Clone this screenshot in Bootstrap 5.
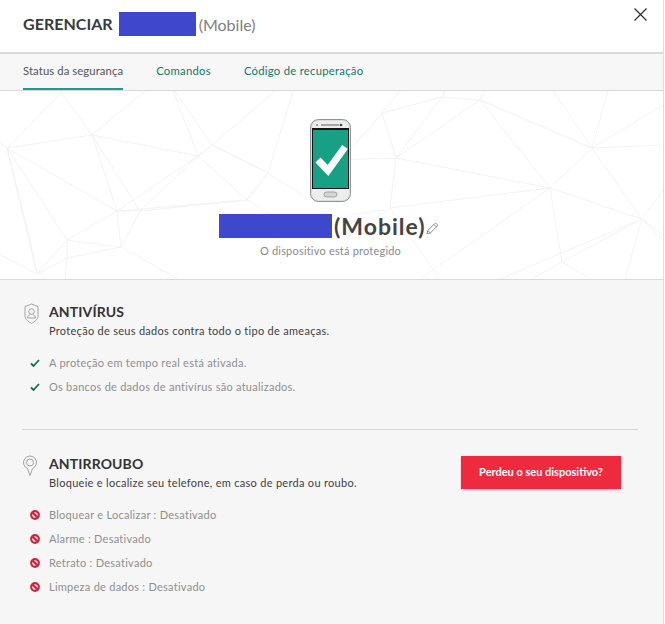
<!DOCTYPE html>
<html lang="pt">
<head>
<meta charset="utf-8">
<title>Gerenciar</title>
<link rel="stylesheet" href="https://cdn.jsdelivr.net/npm/bootstrap@5.3.0/dist/css/bootstrap.min.css">
<style>
html,body{height:624px;overflow:hidden;background:#fff}
body{font-family:"Lato","Open Sans",sans-serif;color:#444;font-size:11px}
.shell{width:664px;height:624px;border-right:1px solid #ddd;display:flex;flex-direction:column}
.mask{background:#3f48cc;display:block;flex:none}
.top-bar{height:52px;padding:12px 0 0 23px;position:relative;background:#fff}
.top-title{font-size:16px;font-weight:700;color:#3a3a3a;letter-spacing:.03px;line-height:24px}
.top-mask{width:77px;height:24px;margin-left:6px;margin-right:3px}
.top-device{font-size:16px;color:#808080;line-height:24px;margin-top:1px}
.close-x{position:absolute;left:634px;top:8px;width:13px;height:13px}
.tab-strip{height:39px;background:#f7f7f7;border-top:2px solid #d9d9d9;border-bottom:1px solid #d9d9d9;padding-left:23px;gap:33px}
.tab-strip .nav-link{padding:0;height:36px;line-height:34px;font-size:11.3px;color:#0f7a68;letter-spacing:.26px;background:none;border:0;border-radius:0}
.tab-strip .nav-link.active{color:#555;border-bottom:2px solid #1f9c88;background:none;letter-spacing:.09px}
.hero{height:189px;position:relative;background:#fff;border-bottom:1px solid #d9d9d9;overflow:hidden}
.mesh{position:absolute;left:0;top:0;width:663px;height:188px}
.hero-body{position:relative;height:188px;padding-top:28px}
.phone{display:block;margin-left:310px;width:41px;height:83px}
.device-line{height:24px;margin-top:12px;margin-left:219px}
.hero-mask{width:113px;height:24px;margin-right:2px}
.device-name{font-size:23px;font-weight:700;line-height:24px;color:#444;letter-spacing:1px}
.hero-note{font-size:11px;text-align:center;color:#8a8a8a;margin-top:5px;line-height:16px;letter-spacing:.2px;padding-right:2px}
.panel{flex:1;background:#f6f6f6;padding:23px 25px 0 22px}
.block-icon{width:20px;flex:none;margin-right:7px}
.block-title{font-size:14px;font-weight:700;color:#333;line-height:18px;letter-spacing:.12px}
.block-text{font-size:11px;color:#3f3f3f;line-height:16px;margin-top:2px;letter-spacing:.29px}
.state-list{margin:12px 0 0 8px;padding:0;list-style:none}
.state-list li{height:24px;line-height:24px;color:#8f8f8f;font-size:11px;letter-spacing:.26px;display:flex;align-items:center}
.state-list svg{width:10px;height:10px;margin-right:9px;flex:none}
.split{border:0;border-top:1px solid #d5d5d5;opacity:1;margin:30px 0 25px}
.lost-btn{width:160px;height:33px;background:#ee2a3e;border:0;border-radius:0;color:#fff;font-size:11px;font-weight:700;padding:0;box-shadow:0 1px 2px rgba(238,42,62,.35);margin:1px 17px 0 0}
.lost-btn:hover{background:#ee2a3e;color:#fff}
</style>
</head>
<body>
<div class="shell">
  <div class="top-bar d-flex align-items-start">
    <span class="top-title">GERENCIAR</span>
    <span class="mask top-mask"></span>
    <span class="top-device">(Mobile)</span>
    <svg class="close-x" viewBox="0 0 13 13"><path d="M.5.5l12 12M12.5.5l-12 12" stroke="#333" stroke-width="1.3" fill="none"/></svg>
  </div>
  <ul class="nav tab-strip">
    <li class="nav-item"><a class="nav-link active" href="#">Status da segurança</a></li>
    <li class="nav-item"><a class="nav-link" href="#">Comandos</a></li>
    <li class="nav-item"><a class="nav-link" href="#">Código de recuperação</a></li>
  </ul>
  <div class="hero">
    <svg class="mesh" viewBox="0 91 663 188" fill="none" stroke="#f3f3f3" stroke-width="1">
      <path d="M0 143L7 148L92 135L198 156L212 145L268 173L247 200L117 211L92 135M7 148L117 211L67 240L37 274L7 148L67 240M117 211L121 247L67 240M140 211L92 135M140 211L117 211M140 211L198 156M140 211L121 247M140 211L247 200M117 211L198 156M212 145L175 91M198 156L173 91M212 145L275 91M268 173L293 91M247 200L268 173L212 145L198 156L247 200M247 200L280 220M268 173L310 200M0 255L37 274L67 258L121 247L180 280M67 240L67 258L65 279M37 274L30 240L7 148M92 135L145 91M92 135L60 91M7 148L63 91"/>
      <path d="M382 113L442 97L480 100L396 158L382 113M396 158L390 208L345 240M396 158L550 188L480 100M442 97L396 158M442 97L445 91M480 100L485 91M382 113L400 91M382 113L350 150M396 158L340 160M390 208L550 188M550 188L592 148L480 100L592 148L663 145M592 148L608 91M592 148L553 91M592 148L663 105M550 188L642 219L663 235M592 148L642 219M550 188L562 262L642 219L625 279M550 188L420 279M562 262L532 279M562 262L590 279M642 219L663 190M642 219L500 279M390 208L440 279M385 210L350 215M663 240L642 219"/>
    </svg>
    <div class="hero-body">
      <svg class="phone" viewBox="0 0 41 83">
        <rect x=".5" y=".5" width="40" height="82" rx="8" fill="#dcdede" stroke="#8f9393"/>
        <rect x="2" y="2" width="37" height="79" rx="6.500" fill="#eceeee"/>
        <rect x="11" y="5" width="18" height="2" fill="#a4a8a8"/>
        <circle cx="31" cy="6" r="1.300" fill="#444"/>
        <circle cx="7" cy="6" r=".8" fill="#444"/>
        <rect x="2" y="9" width="37" height="61" fill="#151515"/>
        <rect x="3" y="11" width="35" height="58" fill="#18a085"/>
        <path d="M8 41l10 10.500 17-23.500" fill="none" stroke="#fff" stroke-width="7"/>
        <rect x="14" y="73" width="13" height="5" rx="2.500" fill="#d4d6d6" stroke="#8f9393" stroke-width=".8"/>
      </svg>
      <div class="device-line d-flex align-items-center">
        <span class="mask hero-mask"></span>
        <span class="device-name">(Mobile)</span>
        <svg width="13" height="13" viewBox="0 0 13 13" fill="none" stroke="#777" stroke-width=".8" class="ms-0 mt-1"><path d="M1 12l.8-3.500 7-7a1 1 0 0 1 1.500 0l1 1a1 1 0 0 1 0 1.500l-7 7zM1.800 8.500l2.700 2.700M8 2.500l2.500 2.500"/></svg>
      </div>
      <div class="hero-note">O dispositivo está protegido</div>
    </div>
  </div>
  <div class="panel">
    <div class="d-flex">
      <div class="block-icon">
        <svg width="20" height="22" viewBox="0 0 20 22" fill="none" stroke="#999" stroke-width=".9"><path d="M9.500 1L3 3.500v10c0 3 4 5.500 6.500 7 2.500-1.500 6.500-4 6.500-7v-10z"/><circle cx="9.500" cy="8.500" r="2.800"/><path d="M5.500 15c0-2 1.500-3 2.800-3.500M13.500 15c0-2-1.500-3-2.800-3.500M5.500 15h8"/></svg>
      </div>
      <div>
        <div class="block-title">ANTIVÍRUS</div>
        <div class="block-text">Proteção de seus dados contra todo o tipo de ameaças.</div>
      </div>
    </div>
    <ul class="state-list">
      <li><svg viewBox="0 0 10 10"><path d="M1 5.500l2.500 2.500 5.500-6" fill="none" stroke="#0f6b57" stroke-width="1.800"/></svg>A proteção em tempo real está ativada.</li>
      <li><svg viewBox="0 0 10 10"><path d="M1 5.500l2.500 2.500 5.500-6" fill="none" stroke="#0f6b57" stroke-width="1.800"/></svg>Os bancos de dados de antivírus são atualizados.</li>
    </ul>
    <hr class="split">
    <div class="d-flex justify-content-between align-items-start">
      <div class="d-flex">
        <div class="block-icon">
          <svg width="18" height="22" viewBox="0 0 18 22" fill="none" stroke="#999" stroke-width=".9"><path d="M8 20.500L5.500 13.500A6.500 6.500 0 1 1 10.500 13.500z"/><circle cx="8" cy="7.500" r="3.500"/></svg>
        </div>
        <div>
          <div class="block-title">ANTIRROUBO</div>
          <div class="block-text">Bloqueie e localize seu telefone, em caso de perda ou roubo.</div>
        </div>
      </div>
      <button type="button" class="btn lost-btn">Perdeu o seu dispositivo?</button>
    </div>
    <ul class="state-list">
      <li><svg viewBox="0 0 10 10" fill="none" stroke="#c9283f" stroke-width="2.200"><circle cx="5" cy="5" r="3.800"/><path d="M2.400 2.400l5.200 5.200"/></svg>Bloquear e Localizar : Desativado</li>
      <li><svg viewBox="0 0 10 10" fill="none" stroke="#c9283f" stroke-width="2.200"><circle cx="5" cy="5" r="3.800"/><path d="M2.400 2.400l5.200 5.200"/></svg>Alarme : Desativado</li>
      <li><svg viewBox="0 0 10 10" fill="none" stroke="#c9283f" stroke-width="2.200"><circle cx="5" cy="5" r="3.800"/><path d="M2.400 2.400l5.200 5.200"/></svg>Retrato : Desativado</li>
      <li><svg viewBox="0 0 10 10" fill="none" stroke="#c9283f" stroke-width="2.200"><circle cx="5" cy="5" r="3.800"/><path d="M2.400 2.400l5.200 5.200"/></svg>Limpeza de dados : Desativado</li>
    </ul>
  </div>
</div>
<script src="https://cdn.jsdelivr.net/npm/bootstrap@5.3.0/dist/js/bootstrap.bundle.min.js"></script>
</body>
</html>
